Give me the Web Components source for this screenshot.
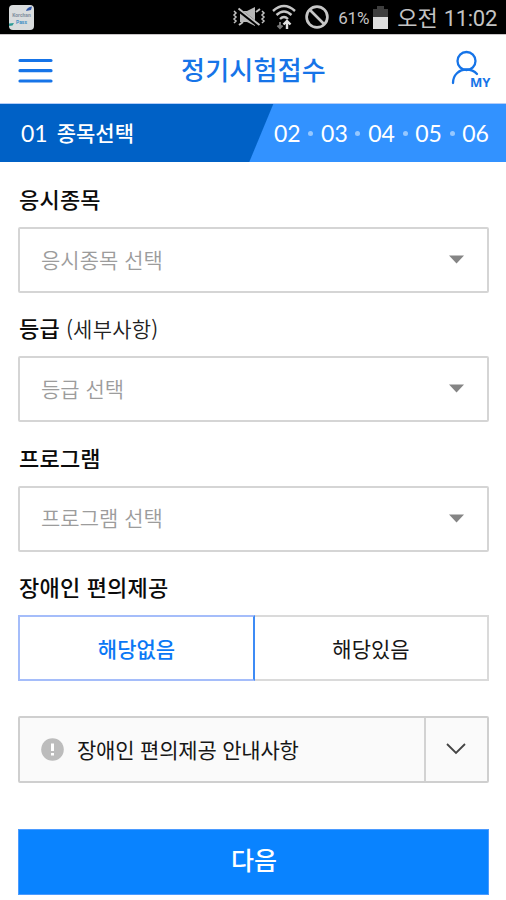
<!DOCTYPE html>
<html lang="ko">
<head>
<meta charset="utf-8">
<title>정기시험접수</title>
<style>
  html, body { margin: 0; background: #fff; }
  body { font-family: "Noto Sans CJK KR", sans-serif; color: #111; width: 506px; height: 900px; overflow: hidden; }
</style>
</head>
<body>
<exam-app></exam-app>
<script>
const define = (name, markup) => {
  const template = document.createElement('template');
  template.innerHTML = '<style>:host{box-sizing:border-box;white-space:nowrap}*{box-sizing:border-box}svg{display:block;flex:none}</style>' + markup;
  customElements.define(name, class extends HTMLElement {
    constructor() {
      super();
      this.attachShadow({ mode: 'open' }).append(template.content.cloneNode(true));
    }
  });
};

define('status-bar', `
<style>
  :host { display: flex; align-items: center; height: 35px; background: #000; border-bottom: 1px solid #c9c5c7; color: #c4c4c4; padding: 0 9px; font-family: Roboto, "Noto Sans CJK KR", sans-serif; }
  .gap { flex: 1; }
  .pct { font-size: 17px; margin: 2px 4px 0 9px; letter-spacing: -.2px; }
  .ampm { font: 22px/34px "Noto Sans CJK KR", sans-serif; margin: -2px 0 0 9px; }
  .time { font-size: 22px; margin: 3px 0 0 6px; line-height: 34px; letter-spacing: -.3px }
</style>
<svg width="25" height="25" viewBox="0 0 25 25">
  <rect width="25" height="25" rx="4" fill="#d9dcdd"/>
  <path d="M17 6Q18 2 23 1.5L22 5Z" fill="#3158a8"/>
  <path d="M0 18.500l5-.5-1.500 2.500-3.500.5z" fill="#2c9a95"/>
  <text x="12.500" y="11.500" font-size="5" font-weight="700" text-anchor="middle" fill="#8290a0" font-family="Roboto">Korchan</text>
  <text x="12.500" y="18.500" font-size="5" font-weight="700" text-anchor="middle" fill="#3f8ec4" font-family="Roboto">Pass</text>
</svg>
<span class="gap"></span>
<svg width="34" height="24" viewBox="0 0 34 24" fill="none" stroke="#c2c2c2" stroke-width="1.500">
  <path d="M2 6l2 2-2 2 2 2-2 2 2 2-2 2M30 6l2 2-2 2 2 2-2 2 2 2-2 2"/>
  <path d="M8 6h7l8-4v19l-8-4H8z" fill="#b8b8b8" stroke="none"/>
  <path d="M6 4.500l22 17" stroke="#000" stroke-width="4"/>
  <path d="M6.500 3.500l21 16.500M7 20l4-3M24 7l4-3" stroke-width="2"/>
</svg>
<svg style="margin-left:6px" width="24" height="26" viewBox="0 0 24 26" fill="none" stroke="#c6c6c6" stroke-width="2.400">
  <path d="M1 7Q12-3 23 7M4.500 11Q12 4 19.500 11M8 15Q12 11 16 15"/>
  <path d="M8 18v6M5.500 21.500L8 24l2.500-2.500" stroke="#777" stroke-width="2"/>
  <path d="M15 25v-7M11.500 20.500L15 17l3.500 3.500" stroke="#e0e0e0"/>
</svg>
<svg style="margin-left:9px" width="24" height="24" viewBox="0 0 24 24" fill="none" stroke="#c6c6c6" stroke-width="2.700"><circle cx="12" cy="12" r="10.400"/><path d="M5 5l14 14"/></svg>
<span class="pct">61%</span>
<svg width="15" height="23" viewBox="0 0 15 23"><path d="M0 3h4V0h7v3h4v8H0z" fill="#3e3e3e"/><path d="M0 11h15v12H0z" fill="#dedede"/></svg>
<span class="ampm">오전</span><span class="time">11:02</span>
`);

define('app-header', `
<style>
  :host { display: grid; grid-template-columns: 1fr auto 1fr; align-items: center; height: 68px; padding: 0 11px 0 18px; color: #1674e8; }
  h1 { margin: 0 0 1px 0; font-size: 26px; line-height: 36px; font-weight: 500; letter-spacing: .25px; position: relative; left: -3px; }
  .my { justify-self: end; margin-top: 4px; }
  .menu { margin-top: 3px; }
</style>
<svg class="menu" width="35" height="26" viewBox="0 0 35 26"><path d="M2 2.500h31M2 12.700h31M2 23h31" stroke="#1674e8" stroke-width="3.200" stroke-linecap="round"/></svg>
<h1><slot></slot></h1>
<svg class="my" width="45" height="44" viewBox="0 0 45 44" fill="none" stroke="#1674e8" stroke-width="2.300" stroke-linecap="round">
  <circle cx="16.500" cy="12" r="9"/><path d="M3 34C3 26 9 20.500 16.500 20.500Q23 20.500 27 25"/>
  <text x="20" y="38" font-family="Open Sans" font-size="13" font-weight="700" fill="#1674e8" stroke="none" textLength="20.500" lengthAdjust="spacingAndGlyphs">MY</text>
</svg>
`);

define('step-bar', `
<style>
  :host { display: flex; justify-content: space-between; align-items: center; height: 59px; border-top: 1px solid #b4cdf8; padding: 0 17px 0 21px; color: #fff; background: linear-gradient(112.500deg, #0061c6 0 252px, #3292ff 253px); font-family: Lato, sans-serif; font-size: 23px; line-height: 30px; }
  .now { display: flex; align-items: center; gap: 9px; }
  b { font: 500 21px/30px "Noto Sans CJK KR", sans-serif; margin-top: -2px; }
  .rest { display: flex; align-items: center; justify-content: space-between; width: 215px; }
  i { width: 5px; height: 5px; border-radius: 50%; background: #96c8ff; }
</style>
<span class="now"><span>01</span><b><slot></slot></b></span>
<span class="rest"><span>02</span><i></i><span>03</span><i></i><span>04</span><i></i><span>05</span><i></i><span>06</span></span>
`);

define('form-field', `
<style>
  :host { display: block; }
  .label { height: 34px; margin-bottom: 10px; padding-left: 1px; font-size: 22px; line-height: 31px; font-weight: 500; color: #0b0b0b; letter-spacing: .2px; }
  ::slotted(small) { font-size: 21px; font-weight: 350; color: #222; }
</style>
<div class="label"><slot name="label"></slot></div><slot></slot>
`);

define('select-box', `
<style>
  :host { display: flex; align-items: center; justify-content: space-between; height: 66px; border: 2px solid #d5d5d5; border-radius: 2px; padding: 0 23px 0 21px; font-size: 21px; line-height: 32px; font-weight: 350; color: #9c9c9c; }
  span { margin-top: -3px; }
  svg { margin-top: -1px; }
</style>
<span><slot></slot></span>
<svg width="15" height="9" viewBox="0 0 15 9"><path d="M0 .5h15L7.500 8.500z" fill="#858585"/></svg>
`);

define('choice-toggle', `
<style>
  :host { display: grid; grid-template-columns: 237px 1fr; height: 66px; font-size: 21px; line-height: 32px; }
  div { display: flex; align-items: center; justify-content: center; border: 2px solid #dadada; border-left: 0; color: #161616; }
  .on { border: 2px solid #a5bdfa; border-right-color: #3e8bf5; color: #0b78f5; font-weight: 500; }
</style>
<div class="on"><slot name="on"></slot></div><div><slot name="off"></slot></div>
`);

define('info-row', `
<style>
  :host { display: grid; grid-template-columns: 1fr 61px; height: 67px; border: 2px solid #cfcfcf; border-radius: 2px; background: #fafafa; font-size: 21px; line-height: 32px; color: #161616; letter-spacing: -.2px; }
  div { display: flex; align-items: center; }
  .text { gap: 13px; padding-left: 21px; border-right: 2px solid #d2d2d2; }
  .arrow { justify-content: center; padding-right: 2px; }
</style>
<div class="text"><svg width="23" height="23" viewBox="0 0 23 23"><circle cx="11.500" cy="11.500" r="11.300" fill="#bcbcbc"/><path d="M11.500 5.500v7.500M11.500 15v2.500" stroke="#fff" stroke-width="3"/></svg><span><slot></slot></span></div>
<div class="arrow"><svg width="20" height="12" viewBox="0 0 20 12"><path d="M1 1l9 9 9-9" fill="none" stroke="#444" stroke-width="1.800"/></svg></div>
`);

define('primary-button', `
<style>
  :host { display: flex; align-items: center; justify-content: center; height: 66px; padding: 0 0 5px 1px; background: #0983ff; border: 1px solid #4b9bff; color: #fff; font-size: 25px; line-height: 36px; font-weight: 500; }
</style>
<slot></slot>
`);

define('exam-app', `
<style>
  :host { display: block; width: 506px; height: 900px; background: #fff; }
  main { display: flex; flex-direction: column; gap: 19.330px; padding: 21px 17px 0 18px; }
  info-row { margin-top: 15.670px; }
  primary-button { margin-top: 26.500px; }
</style>
<status-bar></status-bar>
<app-header>정기시험접수</app-header>
<step-bar>종목선택</step-bar>
<main>
  <form-field><span slot="label">응시종목</span><select-box>응시종목 선택</select-box></form-field>
  <form-field><span slot="label">등급</span><small slot="label"> (세부사항)</small><select-box>등급 선택</select-box></form-field>
  <form-field><span slot="label">프로그램</span><select-box>프로그램 선택</select-box></form-field>
  <form-field><span slot="label">장애인 편의제공</span><choice-toggle><span slot="on">해당없음</span><span slot="off">해당있음</span></choice-toggle></form-field>
  <info-row>장애인 편의제공 안내사항</info-row>
  <primary-button>다음</primary-button>
</main>
`);
</script>
</body>
</html>
